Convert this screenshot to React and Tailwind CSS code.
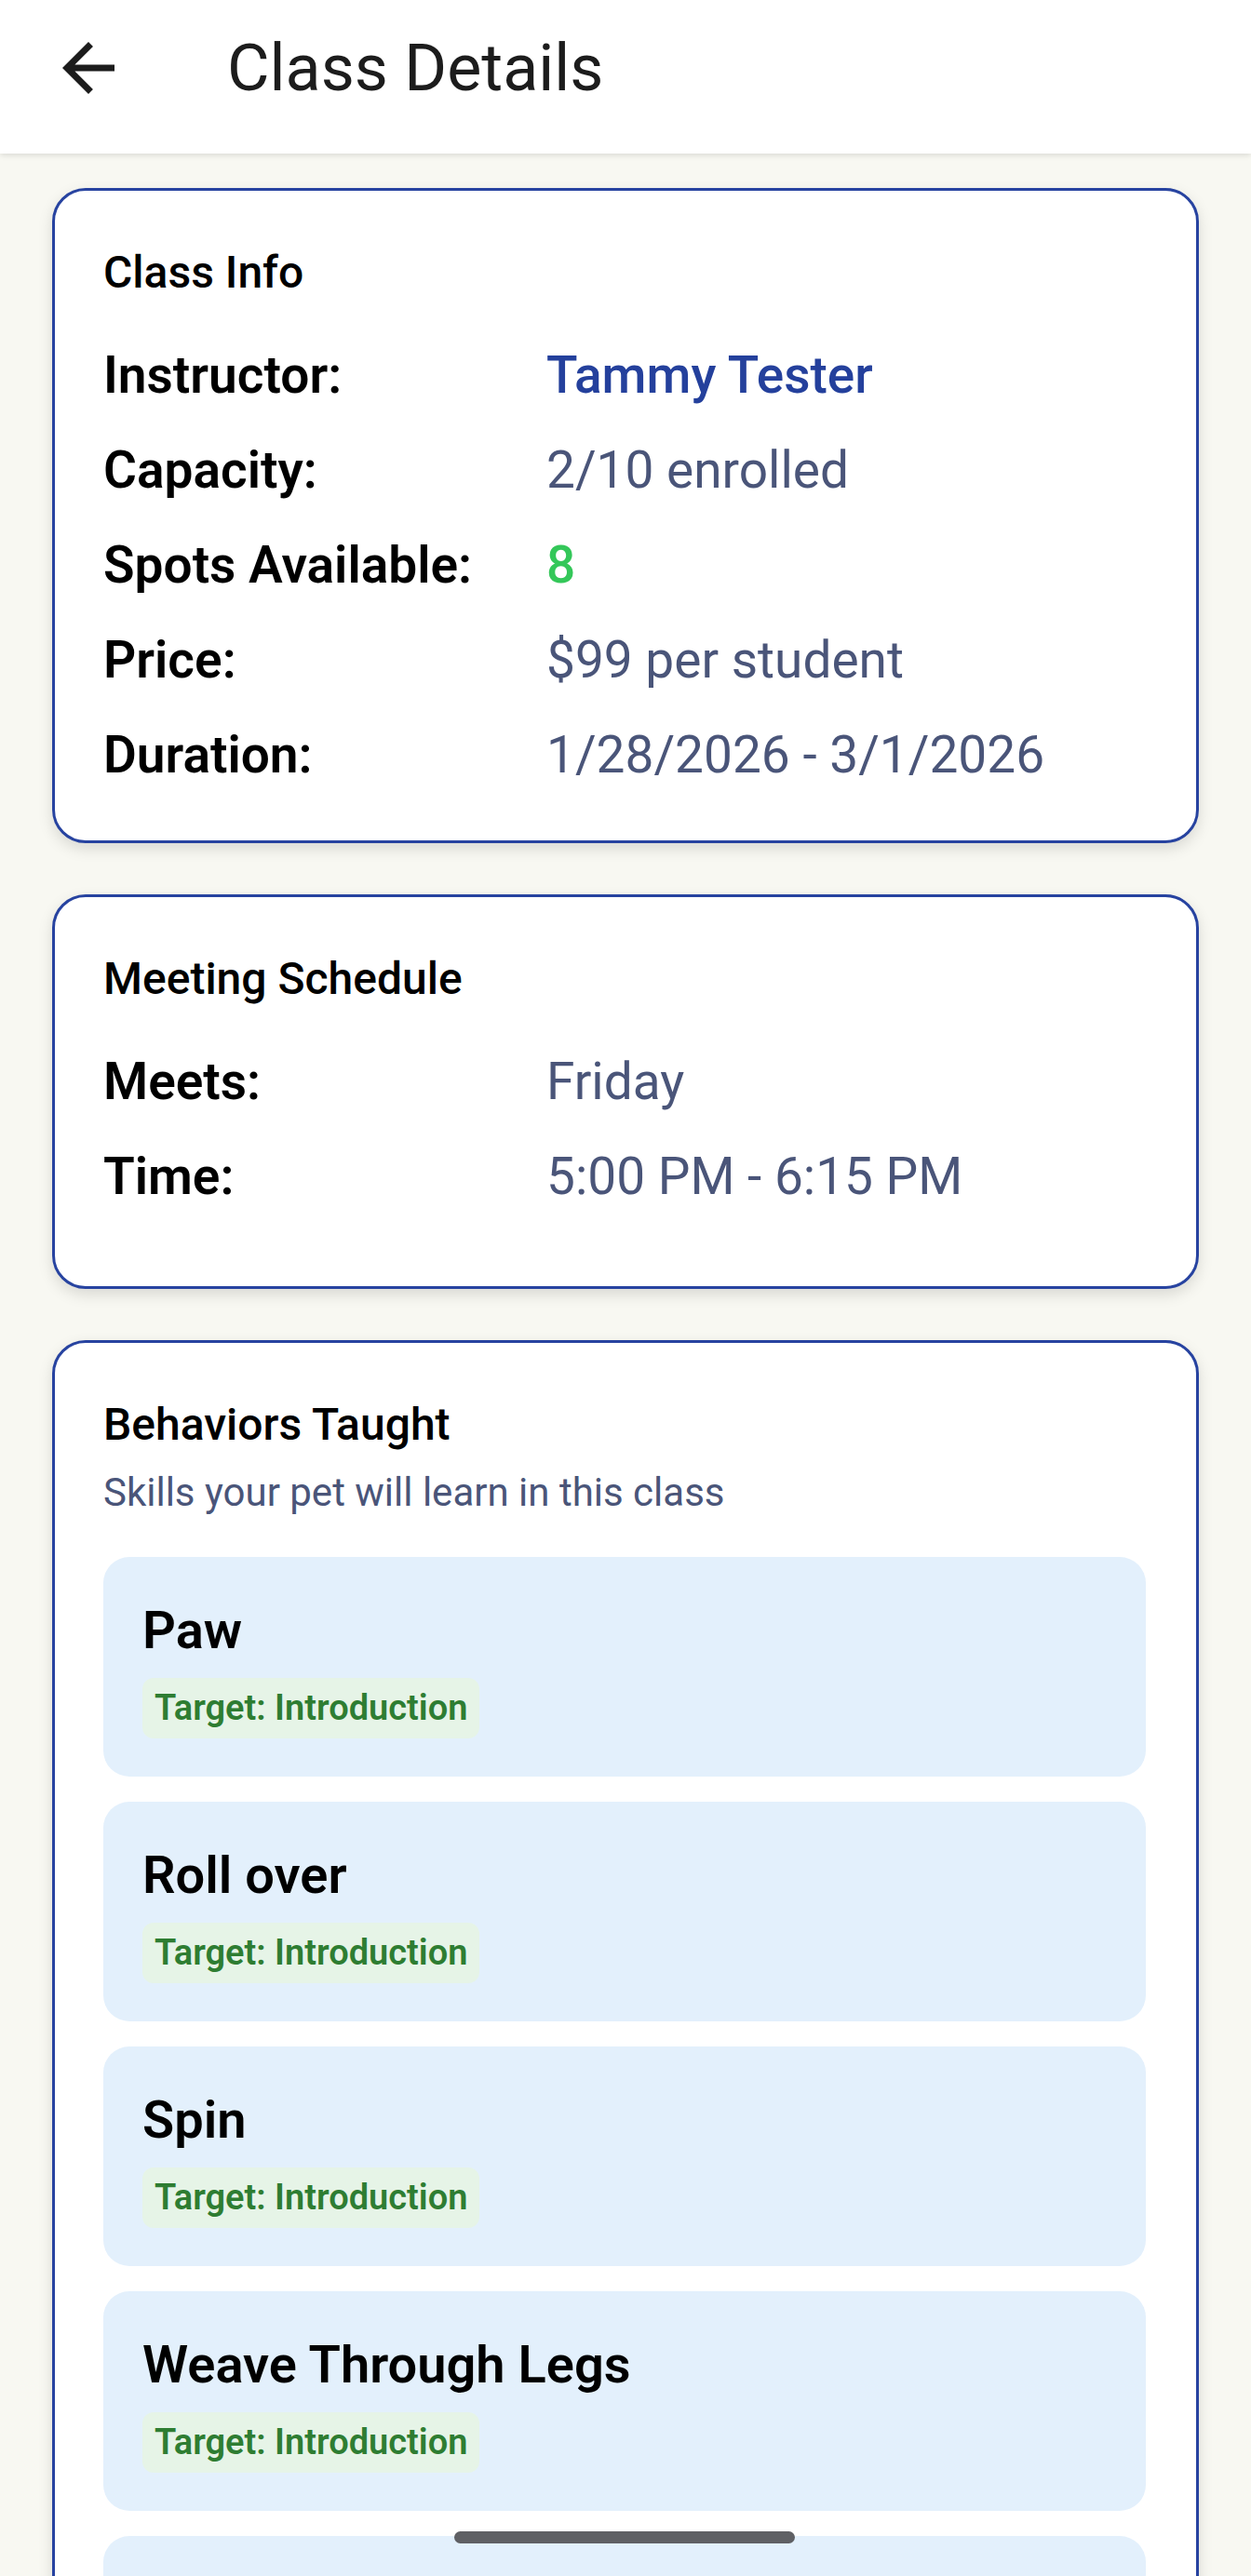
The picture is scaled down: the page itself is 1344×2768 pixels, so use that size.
import { ArrowLeft } from "lucide-react";

const classInfo = [
    { label: "Instructor:", value: "Tammy Tester", tone: "link" },
    { label: "Capacity:", value: "2/10 enrolled" },
    { label: "Spots Available:", value: "8", tone: "good" },
    { label: "Price:", value: "$99 per student" },
    { label: "Duration:", value: "1/28/2026 - 3/1/2026" },
];

const schedule = [
    { label: "Meets:", value: "Friday" },
    { label: "Time:", value: "5:00 PM - 6:15 PM" },
];

const behaviors = [
    { name: "Paw", target: "Introduction" },
    { name: "Roll over", target: "Introduction" },
    { name: "Spin", target: "Introduction" },
    { name: "Weave Through Legs", target: "Introduction" },
    { name: "Sit Pretty", target: "Introduction" },
];

function valueClass(tone) {
    if (tone === "link") return "text-[#24409c] font-medium";
    if (tone === "good") return "text-[#34c759] font-medium";
    return "text-[#4a5579]";
}

function Card({ title, children, className = "" }) {
    return (
        <section
            className={
                "rounded-[36px] border-[3px] border-[#2743a0] bg-white pl-[52px] pr-[54px] pt-[60px] shadow-[0_6px_16px_rgba(0,0,0,0.13)] " +
                className
            }
        >
            <h2 className="text-[48px] leading-[56px] font-medium text-black">{title}</h2>
            {children}
        </section>
    );
}

function InfoRows({ rows }) {
    return (
        <div className="mt-[45px] flex flex-col gap-[28px]">
            {rows.map(r => (
                <div key={r.label} className="flex text-[55px] leading-[74px]">
                    <span className="w-[476px] shrink-0 font-semibold text-black">{r.label}</span>
                    <span className={valueClass(r.tone)}>{r.value}</span>
                </div>
            ))}
        </div>
    );
}

export default function App() {
    return (
        <div
            className="relative h-[2768px] overflow-hidden bg-[#f8f8f2]"
            style={{ fontFamily: "Roboto, 'Noto Sans', sans-serif" }}
        >
            {/* Top bar */}
            <header className="relative z-10 flex h-[165px] items-center bg-white pb-[20px] shadow-[0_2px_6px_rgba(0,0,0,0.12)]">
                <button className="ml-[53px] flex h-[84px] w-[84px] items-center justify-center text-[#1c1c1c]">
                    <svg viewBox="0 0 24 24" className="h-[84px] w-[84px]" fill="currentColor">
                        <path d="M20 11H7.83l5.59-5.59L12 4l-8 8 8 8 1.41-1.41L7.83 13H20v-2z" />
                    </svg>
                </button>
                <h1 className="ml-[107px] text-[70px] leading-none text-[#1c1c1c]">Class Details</h1>
            </header>

            <main className="flex flex-col gap-[55px] px-[56px] pt-[37px]">
                <Card title="Class Info" className="pb-[55px]">
                    <InfoRows rows={classInfo} />
                </Card>

                <Card title="Meeting Schedule" className="pb-[81px]">
                    <InfoRows rows={schedule} />
                </Card>

                <Card title="Behaviors Taught" className="pb-[54px]">
                    <p className="mt-[18px] text-[42px] leading-[54px] text-[#4a5579]">
                        Skills your pet will learn in this class
                    </p>
                    <div className="mt-[42px] flex flex-col gap-[27px]">
                        {behaviors.map(b => (
                            <div key={b.name} className="rounded-[28px] bg-[#e3f0fc] pl-[42px] pr-[40px] pt-[42px] pb-[41px]">
                                <div className="text-[56px] leading-[74px] font-semibold text-black">{b.name}</div>
                                <span className="mt-[14px] inline-flex h-[65px] items-center rounded-[12px] bg-[#e6f4e7] px-[13px] text-[38px] font-semibold text-[#2e7d32]">
                                    Target: {b.target}
                                </span>
                            </div>
                        ))}
                    </div>
                </Card>
            </main>

            {/* Gesture bar */}
            <div className="absolute left-[488px] top-[2720px] h-[13px] w-[366px] rounded-full bg-[#5f6064]" />
        </div>
    );
}
